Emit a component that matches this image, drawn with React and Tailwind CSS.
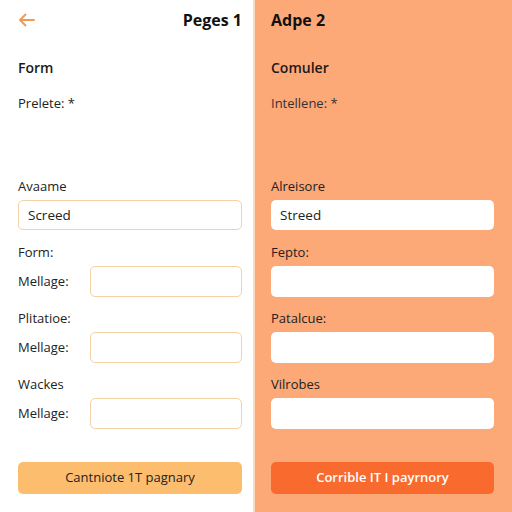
import React from "react";

function LeftRow({ label }) {
  return (
    <div className="flex items-center h-[31px]">
      <span className="w-[72px] text-[13px] text-[#222]">{label}</span>
      <div className="flex-1 h-[31px] rounded-[5px] border border-[#f4d2a8] bg-white" />
    </div>
  );
}

export default function App() {
  return (
    <div className="flex w-[512px] h-[512px] overflow-hidden" style={{ fontFamily: '"Open Sans", sans-serif' }}>
      <div className="w-[255px] h-full bg-white border-r-2 border-[#fbd9bd] flex flex-col pl-[18px] pr-[11px]">
        <div className="flex items-center justify-between h-[20px] mt-[10px]">
          <svg width="18" height="14" viewBox="0 0 18 14" fill="none" stroke="#f09a5a" strokeWidth="2" strokeLinecap="round" strokeLinejoin="round">
            <path d="M16 7H2M7.5 1.5L2 7l5.5 5.5" />
          </svg>
          <span className="text-[16px] font-bold text-[#111]">Peges 1</span>
        </div>
        <div className="mt-[28px] text-[14px] font-semibold text-[#1a1a1a] leading-[20px]">Form</div>
        <div className="mt-[15px] text-[13px] text-[#222] leading-[20px]">Prelete: *</div>
        <div className="mt-[63px] text-[13px] text-[#222] leading-[20px]">Avaame</div>
        <div className="mt-[4px] h-[30px] rounded-[5px] border border-[#f4d2a8] bg-white flex items-center px-[9px] text-[13.5px] text-[#222]">Screed</div>
        <div className="mt-[12px] text-[13px] text-[#222] leading-[20px]">Form:</div>
        <div className="mt-[4px]"><LeftRow label="Mellage:" /></div>
        <div className="mt-[11px] text-[13px] text-[#222] leading-[20px]">Plitatioe:</div>
        <div className="mt-[4px]"><LeftRow label="Mellage:" /></div>
        <div className="mt-[11px] text-[13px] text-[#222] leading-[20px]">Wackes</div>
        <div className="mt-[4px]"><LeftRow label="Mellage:" /></div>
        <div className="mt-[33px] h-[32px] rounded-[5px] bg-[#fdbd6e] flex items-center justify-center text-[13px] text-[#222]">Cantniote 1T pagnary</div>
      </div>
      <div className="flex-1 h-full bg-[#fca877] flex flex-col pl-[16px] pr-[18px]">
        <div className="flex items-center h-[20px] mt-[10px]">
          <span className="text-[16px] font-bold text-[#111]">Adpe 2</span>
        </div>
        <div className="mt-[28px] text-[14px] font-semibold text-[#1a1a1a] leading-[20px]">Comuler</div>
        <div className="mt-[15px] text-[13px] text-[#333] leading-[20px]">Intellene: *</div>
        <div className="mt-[63px] text-[13px] text-[#222] leading-[20px]">Alreisore</div>
        <div className="mt-[4px] h-[30px] rounded-[5px] bg-white flex items-center px-[9px] text-[13.5px] text-[#222]">Streed</div>
        <div className="mt-[12px] text-[13px] text-[#222] leading-[20px]">Fepto:</div>
        <div className="mt-[4px] h-[31px] rounded-[5px] bg-white" />
        <div className="mt-[11px] text-[13px] text-[#222] leading-[20px]">Patalcue:</div>
        <div className="mt-[4px] h-[31px] rounded-[5px] bg-white" />
        <div className="mt-[11px] text-[13px] text-[#222] leading-[20px]">Vilrobes</div>
        <div className="mt-[4px] h-[31px] rounded-[5px] bg-white" />
        <div className="mt-[33px] h-[32px] rounded-[5px] bg-[#f86a2e] flex items-center justify-center text-[13px] font-semibold text-white">Corrible IT I payrnory</div>
      </div>
    </div>
  );
}
